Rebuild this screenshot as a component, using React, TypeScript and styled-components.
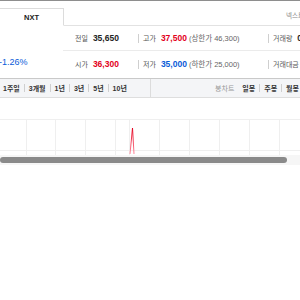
import React from "react"
import styled, { createGlobalStyle } from "styled-components"

const GlobalStyle = createGlobalStyle`
  html, body {
    margin: 0;
    padding: 0;
    background: #fff;
  }
  body {
    font-family: "Liberation Sans", "Noto Sans CJK KR", sans-serif;
  }
`

const Page = styled.div`
  width: 300px;
  height: 300px;
  overflow: hidden;
  background: #fff;
`

const TabBar = styled.div`
  display: flex;
  align-items: flex-end;
  justify-content: space-between;
  height: 24px;
  border-top: 1px solid #8e8e8e;
  border-bottom: 1px solid #e2e2e2;
`

const Tab = styled.div`
  width: 63px;
  height: 16px;
  margin-left: -1px;
  margin-bottom: -1px;
  border: 1px solid #dcdcdc;
  border-bottom-color: #fff;
  background: #fff;
  display: flex;
  align-items: center;
  justify-content: center;
  font-size: 7.5px;
  font-weight: 700;
  color: #222;
`

const Market = styled.div`
  align-self: center;
  padding-top: 4px;
  margin-right: -22px;
  white-space: nowrap;
  font-size: 6.5px;
  color: #888;
`

const Info = styled.div`
  display: grid;
  grid-template-columns: 63px 1fr;
  height: 52px;
`

const PriceCol = styled.div`
  display: grid;
  grid-template-rows: 25px 1fr;
`

const Change = styled.div`
  align-self: center;
  margin-left: -1px;
  padding-bottom: 6px;
  font-size: 9px;
  color: #0a5bd8;
  white-space: nowrap;
`

const Rows = styled.div`
  display: grid;
  grid-template-rows: 25px 1fr;
`

const Row = styled.div<{ $line?: boolean }>`
  display: grid;
  grid-template-columns: 75px 130px 1fr;
  align-items: center;
  border-bottom: ${(p) => (p.$line ? "1px solid #ebebeb" : "none")};
`

const Cell = styled.div<{ $sep?: boolean }>`
  display: flex;
  align-items: center;
  white-space: nowrap;
  line-height: 9px;
  padding-left: ${(p) => (p.$sep ? "4px" : "12px")};
  border-left: ${(p) => (p.$sep ? "1px solid #cfcfcf" : "none")};
`

const Label = styled.span`
  font-size: 7px;
  color: #555;
`

const Value = styled.span<{ $tone?: "up" | "down" }>`
  margin-left: 5px;
  font-size: 8.5px;
  font-weight: 700;
  color: ${(p) =>
    p.$tone === "up" ? "#e3001b" : p.$tone === "down" ? "#0a5bd8" : "#222"};
`

const Sub = styled.span`
  margin-left: 2px;
  font-size: 7.5px;
  color: #666;
`

const Toolbar = styled.div`
  display: flex;
  height: 18px;
  background: #f4f5f7;
  border-top: 1px solid #c9c9c9;
  border-bottom: 1px solid #dedede;
`

const Group = styled.div<{ $right?: boolean }>`
  display: flex;
  align-items: center;
  gap: 4px;
  white-space: nowrap;
  box-sizing: border-box;
  width: ${(p) => (p.$right ? "auto" : "151px")};
  padding-left: ${(p) => (p.$right ? "64px" : "3px")};
  border-right: ${(p) => (p.$right ? "none" : "1px solid #dcdcdc")};
`

const Item = styled.span<{ $muted?: boolean }>`
  font-size: 7px;
  font-weight: ${(p) => (p.$muted ? 400 : 700)};
  color: ${(p) => (p.$muted ? "#999" : "#333")};
  margin-right: ${(p) => (p.$muted ? "4px" : "0")};
`

const Sep = styled.span`
  width: 1px;
  height: 8px;
  background: #cfcfcf;
`

const Chart = styled.svg`
  display: block;
  margin-top: 21px;
`

const Track = styled.div`
  height: 10px;
  background: #f6f6f6;
  padding-top: 2px;
  box-sizing: border-box;
`

const Thumb = styled.div`
  width: 287px;
  height: 6px;
  border-radius: 3px;
  background: #8a8a8a;
`

const periods = ["1주일", "3개월", "1년", "3년", "5년", "10년"]
const candles = ["일봉", "주봉", "월봉"]
const gridX = [26, 55, 85, 115, 129, 159, 189, 219, 249, 279]

export default function App() {
  return (
    <Page>
      <GlobalStyle />
      <TabBar>
        <Tab>NXT</Tab>
        <Market>넥스트레이드</Market>
      </TabBar>
      <Info>
        <PriceCol>
          <div />
          <Change>-1.26%</Change>
        </PriceCol>
        <Rows>
          <Row $line>
            <Cell>
              <Label>전일</Label>
              <Value>35,650</Value>
            </Cell>
            <Cell $sep>
              <Label>고가</Label>
              <Value $tone="up">37,500</Value>
              <Sub>(상한가 46,300)</Sub>
            </Cell>
            <Cell $sep>
              <Label>거래량</Label>
              <Value>0</Value>
            </Cell>
          </Row>
          <Row>
            <Cell>
              <Label>시가</Label>
              <Value $tone="up">36,300</Value>
            </Cell>
            <Cell $sep>
              <Label>저가</Label>
              <Value $tone="down">35,000</Value>
              <Sub>(하한가 25,000)</Sub>
            </Cell>
            <Cell $sep>
              <Label>거래대금</Label>
            </Cell>
          </Row>
        </Rows>
      </Info>
      <Toolbar>
        <Group>
          {periods.map((p, i) => (
            <React.Fragment key={p}>
              {i > 0 && <Sep />}
              <Item>{p}</Item>
            </React.Fragment>
          ))}
        </Group>
        <Group $right>
          <Item $muted>봉차트</Item>
          {candles.map((c, i) => (
            <React.Fragment key={c}>
              {i > 0 && <Sep />}
              <Item>{c}</Item>
            </React.Fragment>
          ))}
        </Group>
      </Toolbar>
      <Chart width="300" height="36" viewBox="0 0 300 36">
        <defs>
          <linearGradient id="spike" x1="0" y1="0" x2="0" y2="1">
            <stop offset="0" stopColor="#e4001e" />
            <stop offset="1" stopColor="#ff8a9c" />
          </linearGradient>
        </defs>
        <line x1="0" y1="0.5" x2="300" y2="0.5" stroke="#efefef" />
        <line x1="0" y1="31.5" x2="300" y2="31.5" stroke="#efefef" />
        {gridX.map((x) => (
          <line key={x} x1={x + 0.5} y1="0" x2={x + 0.5} y2="36" stroke="#efefef" />
        ))}
        <path
          d="M130 35 L132.5 9 L134 35"
          fill="none"
          stroke="url(#spike)"
          strokeWidth="1"
        />
      </Chart>
      <Track>
        <Thumb />
      </Track>
    </Page>
  )
}
